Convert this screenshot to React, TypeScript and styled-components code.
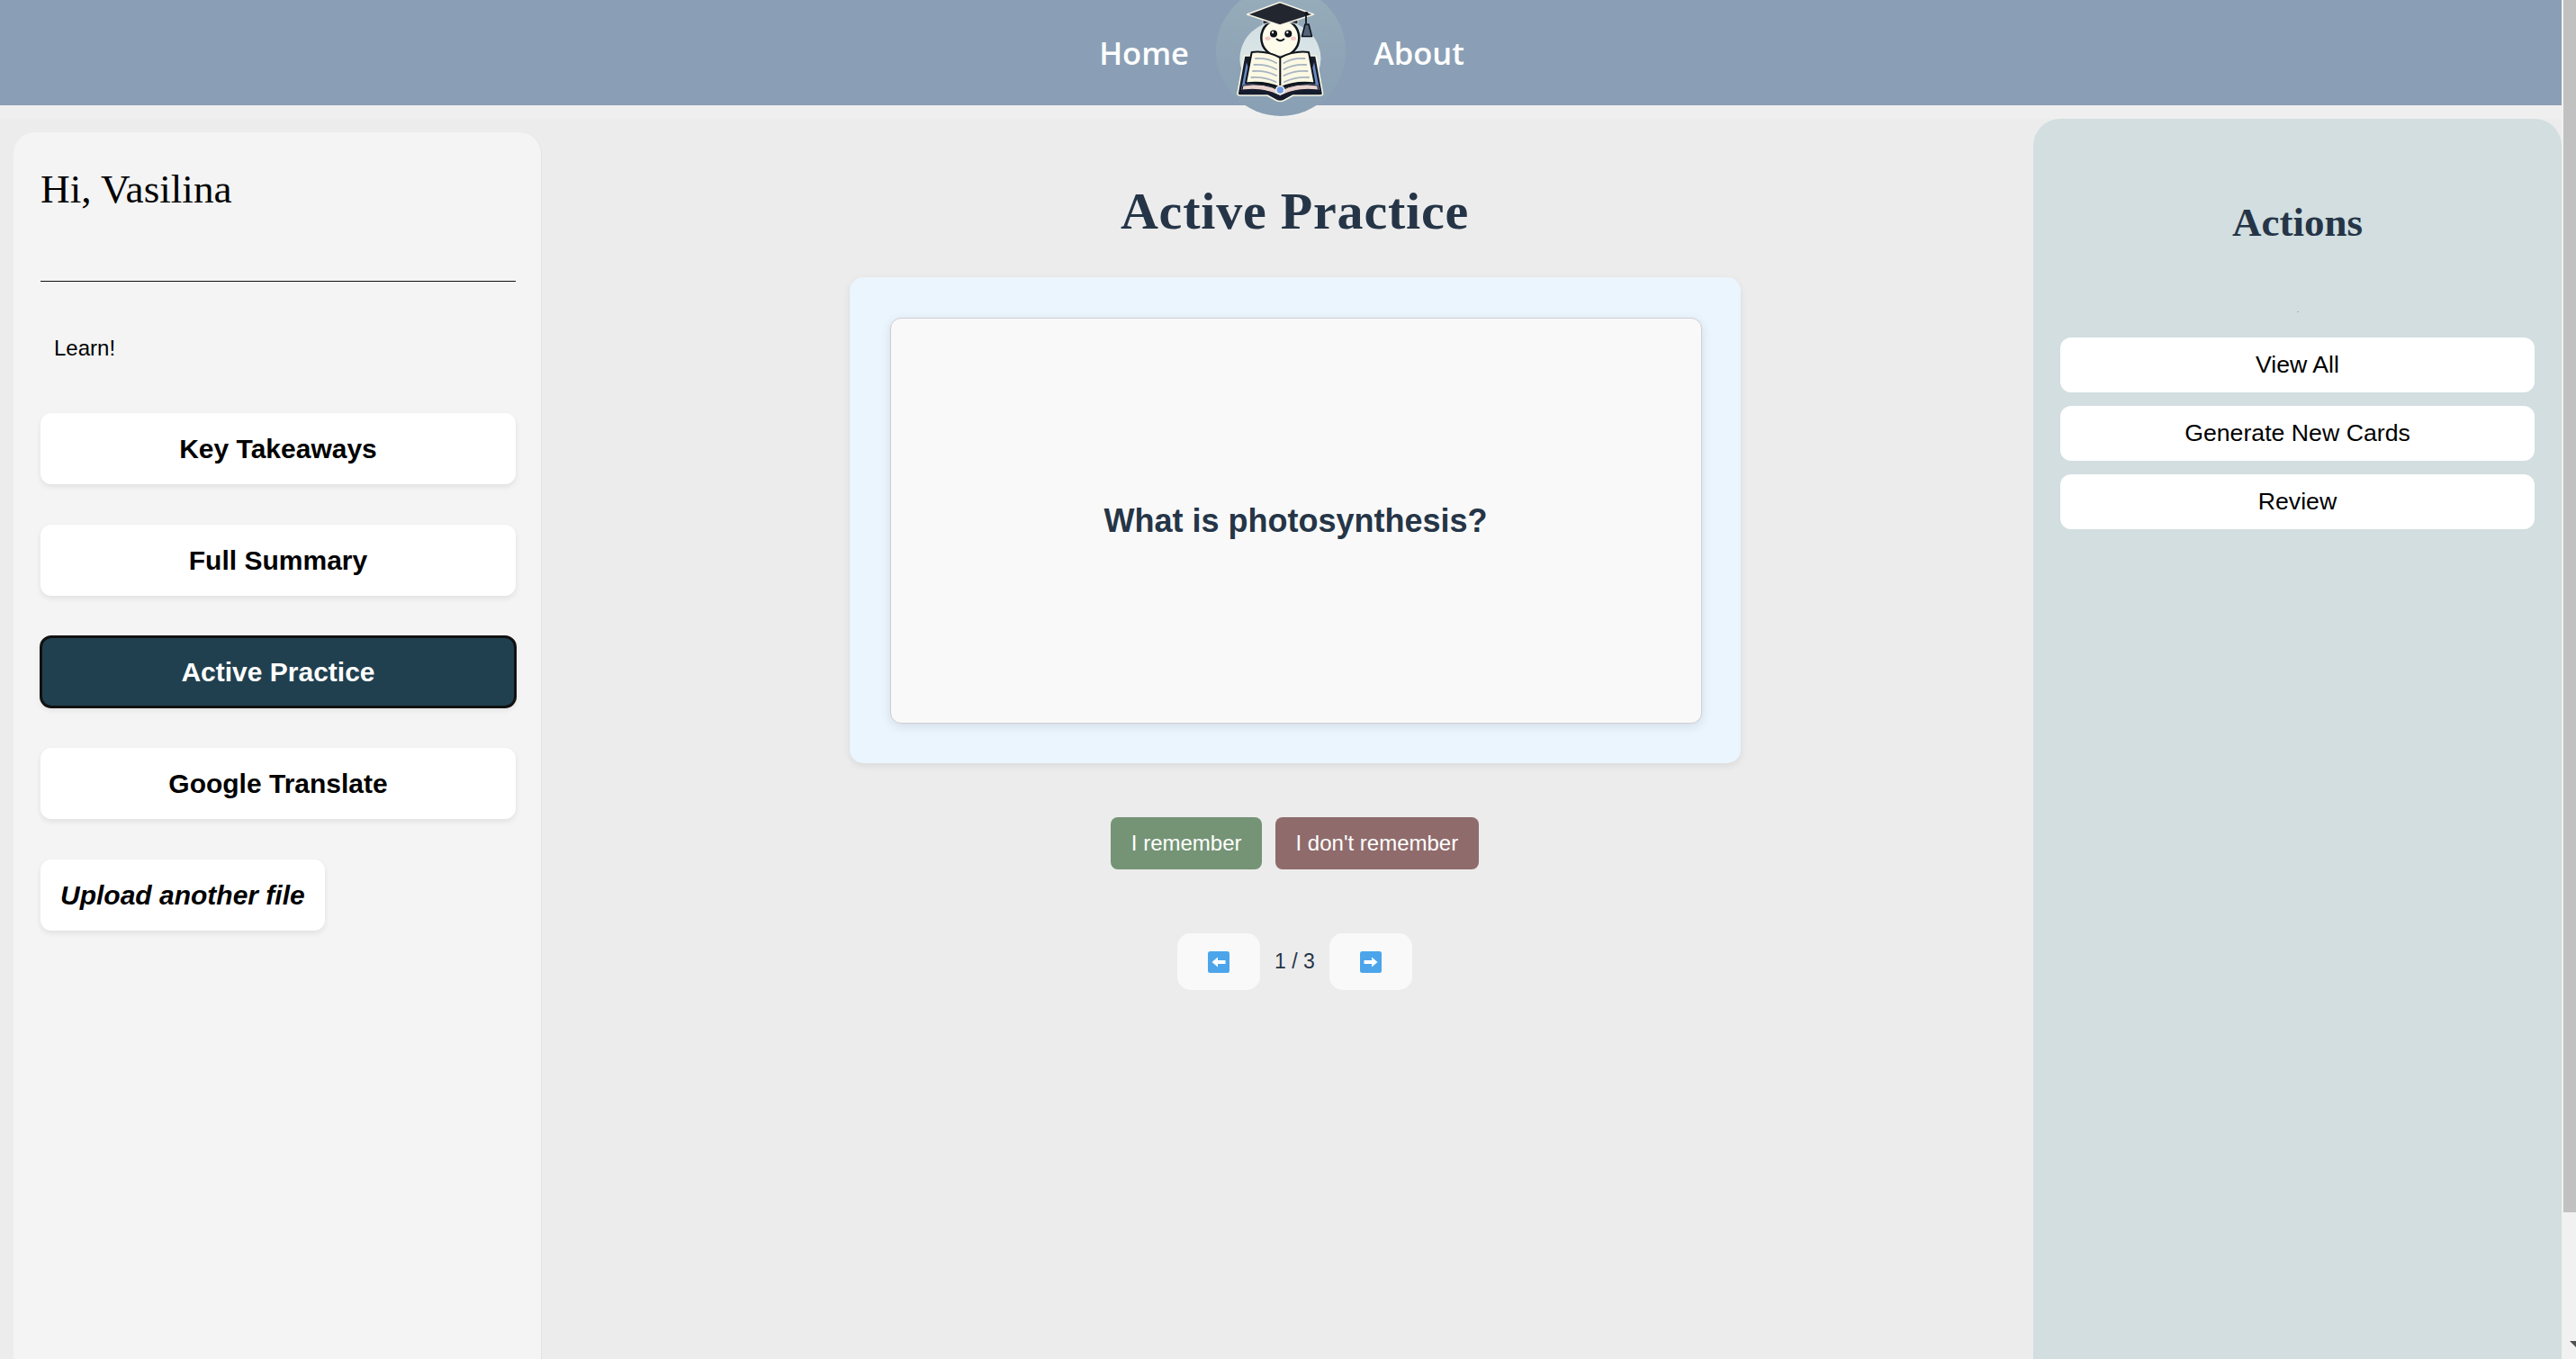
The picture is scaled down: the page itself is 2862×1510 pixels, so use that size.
import React from "react";
import styled, { createGlobalStyle } from "styled-components";

const Global = createGlobalStyle`
  html, body { margin: 0; padding: 0; height: 100%; overflow: hidden; background: #efefef; }
  #root { height: 100%; }
  * { box-sizing: border-box; }
`;

const Shell = styled.div`
  display: flex;
  height: 1510px;
  overflow: hidden;
  font-family: "Liberation Sans", Arial, sans-serif;
`;
const Page = styled.div`
  flex: 1;
  min-width: 0;
  display: flex;
  flex-direction: column;
`;
const ScrollTrack = styled.div`
  width: 16px;
  flex: none;
  overflow: hidden;
  background: #f1f1f1;
  display: flex;
  flex-direction: column;
  align-items: flex-start;
`;
const ScrollThumb = styled.div`
  width: 14px;
  height: 1347px;
  margin-left: 2px;
  background: #c1c1c1;
`;
const ScrollSpace = styled.div`
  flex: 1;
`;
const ScrollArrow = styled.div`
  flex: none;
  width: 0;
  height: 0;
  margin: 0 0 13px 9px;
  border-left: 7px solid transparent;
  border-right: 7px solid transparent;
  border-top: 7px solid #505050;
`;
const NavBar = styled.nav`
  height: 117px;
  flex: none;
  background: #8a9fb5;
  display: flex;
  justify-content: center;
  align-items: center;
  padding-left: 2px;
  gap: 30.5px;
`;
const NavLink = styled.a`
  font-family: "Open Sans", "Noto Sans", sans-serif;
  font-weight: 600;
  font-size: 34.5px;
  color: #fff;
`;
const LogoSlot = styled.div`
  position: relative;
  width: 144px;
  height: 117px;
`;
const LogoArt = styled.svg`
  position: absolute;
  left: 0;
  top: -15px;
  width: 144px;
  height: 144px;
`;
const Body = styled.div`
  flex: 1;
  min-height: 0;
  margin-top: 15px;
  background: #ececec;
  display: flex;
  align-items: stretch;
`;
const LeftPanel = styled.aside`
  flex: none;
  width: 587px;
  margin: 15px 16px 0 15px;
  padding: 30px;
  background: #f4f4f4;
  border-radius: 24px 24px 0 0;
  border-right: 1px solid #e4e4e4;
  display: flex;
  flex-direction: column;
  align-items: flex-start;
`;
const Greeting = styled.h2`
  margin: 0;
  height: 89px;
  padding-top: 8px;
  font-family: "Liberation Serif", "Times New Roman", serif;
  font-weight: 400;
  font-size: 45.2px;
  line-height: 50px;
  color: #000;
`;
const Rule = styled.hr`
  width: 528px;
  margin: 46px 0 0;
  border: 0;
  height: 1px;
  background: #111;
`;
const LearnLabel = styled.p`
  margin: 59px 0 0 15px;
  font-size: 24px;
  line-height: 30px;
  color: #000;
`;
const NavList = styled.div`
  margin-top: 57px;
  display: flex;
  flex-direction: column;
  align-items: flex-start;
  gap: 45px;
`;
const SideButton = styled.button<{ $active?: boolean; $wide?: boolean; $italic?: boolean }>`
  width: ${(p) => (p.$wide ? "528px" : "auto")};
  height: 79px;
  padding: 0 22px;
  border: 0;
  border-radius: 12px;
  font-family: "Liberation Sans", Arial, sans-serif;
  font-weight: 700;
  font-size: 30px;
  font-style: ${(p) => (p.$italic ? "italic" : "normal")};
  color: ${(p) => (p.$active ? "#fff" : "#000")};
  background: ${(p) => (p.$active ? "#20404f" : "#fff")};
  outline: ${(p) => (p.$active ? "3px solid #111" : "none")};
  outline-offset: -2px;
  box-shadow: 0 3px 6px rgba(0, 0, 0, 0.08);
`;
const Center = styled.main`
  flex: 1;
  min-width: 0;
  display: flex;
  flex-direction: column;
  align-items: center;
`;
const Title = styled.h1`
  margin: 68px 0 0;
  font-family: "Liberation Serif", "Times New Roman", serif;
  font-weight: 700;
  font-size: 58px;
  letter-spacing: 0.8px;
  line-height: 70px;
  color: #253547;
`;
const CardFrame = styled.section`
  margin-top: 38px;
  width: 990px;
  padding: 45px 43px 44px 45px;
  background: #eaf5fe;
  border-radius: 15px;
  box-shadow: 0 3px 8px rgba(0, 0, 0, 0.08);
`;
const FlashCard = styled.div`
  height: 451px;
  background: #f9f9f9;
  border: 1px solid #cfcfd3;
  border-radius: 12px;
  box-shadow: 0 3px 12px rgba(0, 0, 0, 0.1);
  display: flex;
  align-items: center;
  justify-content: center;
  font-weight: 700;
  font-size: 36px;
  color: #253547;
`;
const AnswerRow = styled.div`
  margin-top: 60px;
  display: flex;
  gap: 15px;
`;
const AnswerButton = styled.button<{ $tone: string }>`
  height: 58px;
  padding: 0 22.500px;
  border: 0;
  border-radius: 8px;
  font-family: "Liberation Sans", Arial, sans-serif;
  font-size: 24px;
  color: #fff;
  background: ${(p) => p.$tone};
`;
const Pager = styled.div`
  margin-top: 71px;
  display: flex;
  align-items: center;
  gap: 16px;
`;
const PageButton = styled.button`
  width: 92px;
  height: 63px;
  padding: 0;
  border: 0;
  border-radius: 15px;
  background: #f9f9f9;
  display: flex;
  align-items: center;
  justify-content: center;
`;
const PageCount = styled.span`
  font-size: 23px;
  color: #253547;
`;
const RightPanel = styled.aside`
  flex: none;
  width: 587px;
  padding: 0 30px;
  background: #d2dee0;
  border-radius: 30px 30px 0 0;
  display: flex;
  flex-direction: column;
`;
const PanelTitle = styled.h2`
  margin: 90px 0 0;
  text-align: center;
  font-family: "Liberation Serif", "Times New Roman", serif;
  font-weight: 700;
  font-size: 45px;
  line-height: 50px;
  color: #253547;
`;
const Speck = styled.div`
  margin: 74px auto 0;
  width: 2px;
  height: 1px;
  background: #a9b4b6;
`;
const ActionList = styled.div`
  margin-top: 28px;
  display: flex;
  flex-direction: column;
  gap: 15px;
`;
const ActionButton = styled.button`
  height: 61px;
  border: 0;
  border-radius: 12px;
  background: #fff;
  color: #000;
  font-family: "Liberation Sans", Arial, sans-serif;
  font-size: 26.7px;
`;

const ArrowIcon = ({ dir }: { dir: "left" | "right" }) => (
  <svg width="24" height="24" viewBox="0 0 24 24" aria-hidden="true">
    <rect width="24" height="24" rx="2.5" fill="#4ca5ea" />
    <path
      d={dir === "left" ? "M4.500 12 11 6.500V10h8.500v4H11v3.500z" : "M19.500 12 13 6.500V10H4.500v4H13v3.500z"}
      fill="#fff"
    />
  </svg>
);

const Logo = () => (
  <LogoArt viewBox="0 0 144 144" aria-hidden="true">
    <defs>
      <linearGradient id="disc" x1="0" y1="0" x2="0" y2="1">
        <stop offset="0" stopColor="#97adba" />
        <stop offset="0.6" stopColor="#8ea4b6" />
        <stop offset="1" stopColor="#89a0b4" />
      </linearGradient>
      <linearGradient id="glow" x1="0" y1="0" x2="0" y2="1">
        <stop offset="0" stopColor="#d2dfe2" />
        <stop offset="0.6" stopColor="#dbe6e8" />
        <stop offset="0.85" stopColor="#a3b7c3" />
        <stop offset="1" stopColor="#8ea4b6" />
      </linearGradient>
      <filter id="soft" x="-5%" y="-5%" width="110%" height="110%">
        <feGaussianBlur stdDeviation="0.45" />
      </filter>
    </defs>
    <g filter="url(#soft)">
      <circle cx="72" cy="72" r="72" fill="url(#disc)" />
      <ellipse cx="71.500" cy="80" rx="45" ry="42" fill="url(#glow)" />

      {/* head */}
      <circle cx="71.300" cy="57" r="21" fill="#fdfcea" stroke="#10131c" strokeWidth="2.500" />
      <circle cx="64" cy="52.500" r="4" fill="#10131c" />
      <circle cx="80.300" cy="52.500" r="4" fill="#10131c" />
      <circle cx="63" cy="51" r="1.200" fill="#fff" />
      <circle cx="79.300" cy="51" r="1.200" fill="#fff" />
      <ellipse cx="57.500" cy="57.800" rx="3" ry="2.200" fill="#f3c9c8" />
      <ellipse cx="86" cy="57.800" rx="3" ry="2.200" fill="#f3c9c8" />
      <path d="M67.500 58.500q4 3.500 8 0" fill="none" stroke="#10131c" strokeWidth="1.800" strokeLinecap="round" />

      {/* cap */}
      <path d="M52 32v10q19.500-6 39 0V32z" fill="#2c2e36" stroke="#c9ced3" strokeWidth="1.200" strokeLinejoin="round" />
      <path d="M34.500 31 71 17.500 108.500 31 71 43z" fill="#24262e" stroke="#f6f5e8" strokeWidth="1.400" strokeLinejoin="round" />
      <path d="M100 28.500v13" stroke="#10131c" strokeWidth="1.800" />
      <circle cx="100.500" cy="30" r="2" fill="#10131c" />
      <path d="M99 42h4l3.500 13.500h-11z" fill="#54647a" stroke="#10131c" strokeWidth="1.600" strokeLinejoin="round" />

      {/* book covers */}
      <path
        d="M31.500 77 24 119q0 2 3 2l30 0 10 5.500q4.300 2 8.600 0l10-5.500 30 0q3 0 3-2L111 77z"
        fill="#171d2d"
        stroke="#f8f7e4"
        strokeWidth="1.600"
        strokeLinejoin="round"
      />
      <path d="M34 84 28 115l15-1.500-9-29zM109 84l6 31-15-1.500 9-29z" fill="#6a8cc4" />
      <path d="M30 110q24-4 41.300 6 17.300-10 41.300-6l1 5q-24-3-42.300 6.500-18.300-9.500-42.300-6.500z" fill="#ead3ce" stroke="#171d2d" strokeWidth="1" />

      {/* pages */}
      <path
        d="M71.300 79Q56 71 39.700 73L33 107.500q22-2.500 38.300 5 16.300-7.500 38.300-5L103 73Q86.500 71 71.300 79z"
        fill="#fbf8e4"
        stroke="#10131c"
        strokeWidth="2"
        strokeLinejoin="round"
      />
      <g fill="none" stroke="#a8b4c0" strokeWidth="1.900" strokeLinecap="round">
        <path d="M44 80q13-1 23 5" />
        <path d="M42.500 87q13-1 24.500 5" />
        <path d="M41 94q14-1 26 5" />
        <path d="M39.500 101q14-1 27 5" />
        <path d="M98.500 80q-13-1-23 5" />
        <path d="M100 87q-13-1-24.500 5" />
        <path d="M101.500 94q-14-1-26 5" />
        <path d="M103 101q-14-1-27 5" />
      </g>
      <path d="M71.300 79v33" stroke="#10131c" strokeWidth="2" />
      <circle cx="71.300" cy="115" r="4.500" fill="#6f9ce6" stroke="#f4f5ea" strokeWidth="1.600" />
    </g>
  </LogoArt>
);

export default function App() {
  return (
    <>
      <Global />
      <Shell>
        <Page>
          <NavBar>
            <NavLink>Home</NavLink>
            <LogoSlot>
              <Logo />
            </LogoSlot>
            <NavLink>About</NavLink>
          </NavBar>
          <Body>
            <LeftPanel>
              <Greeting>Hi, Vasilina</Greeting>
              <Rule />
              <LearnLabel>Learn!</LearnLabel>
              <NavList>
                <SideButton $wide>Key Takeaways</SideButton>
                <SideButton $wide>Full Summary</SideButton>
                <SideButton $wide $active>Active Practice</SideButton>
                <SideButton $wide>Google Translate</SideButton>
                <SideButton $italic>Upload another file</SideButton>
              </NavList>
            </LeftPanel>
            <Center>
              <Title>Active Practice</Title>
              <CardFrame>
                <FlashCard>What is photosynthesis?</FlashCard>
              </CardFrame>
              <AnswerRow>
                <AnswerButton $tone="#749475">I remember</AnswerButton>
                <AnswerButton $tone="#8f6b6b">I don't remember</AnswerButton>
              </AnswerRow>
              <Pager>
                <PageButton><ArrowIcon dir="left" /></PageButton>
                <PageCount>1 / 3</PageCount>
                <PageButton><ArrowIcon dir="right" /></PageButton>
              </Pager>
            </Center>
            <RightPanel>
              <PanelTitle>Actions</PanelTitle>
              <Speck />
              <ActionList>
                <ActionButton>View All</ActionButton>
                <ActionButton>Generate New Cards</ActionButton>
                <ActionButton>Review</ActionButton>
              </ActionList>
            </RightPanel>
          </Body>
        </Page>
        <ScrollTrack>
          <ScrollThumb />
          <ScrollSpace />
          <ScrollArrow />
        </ScrollTrack>
      </Shell>
    </>
  );
}
